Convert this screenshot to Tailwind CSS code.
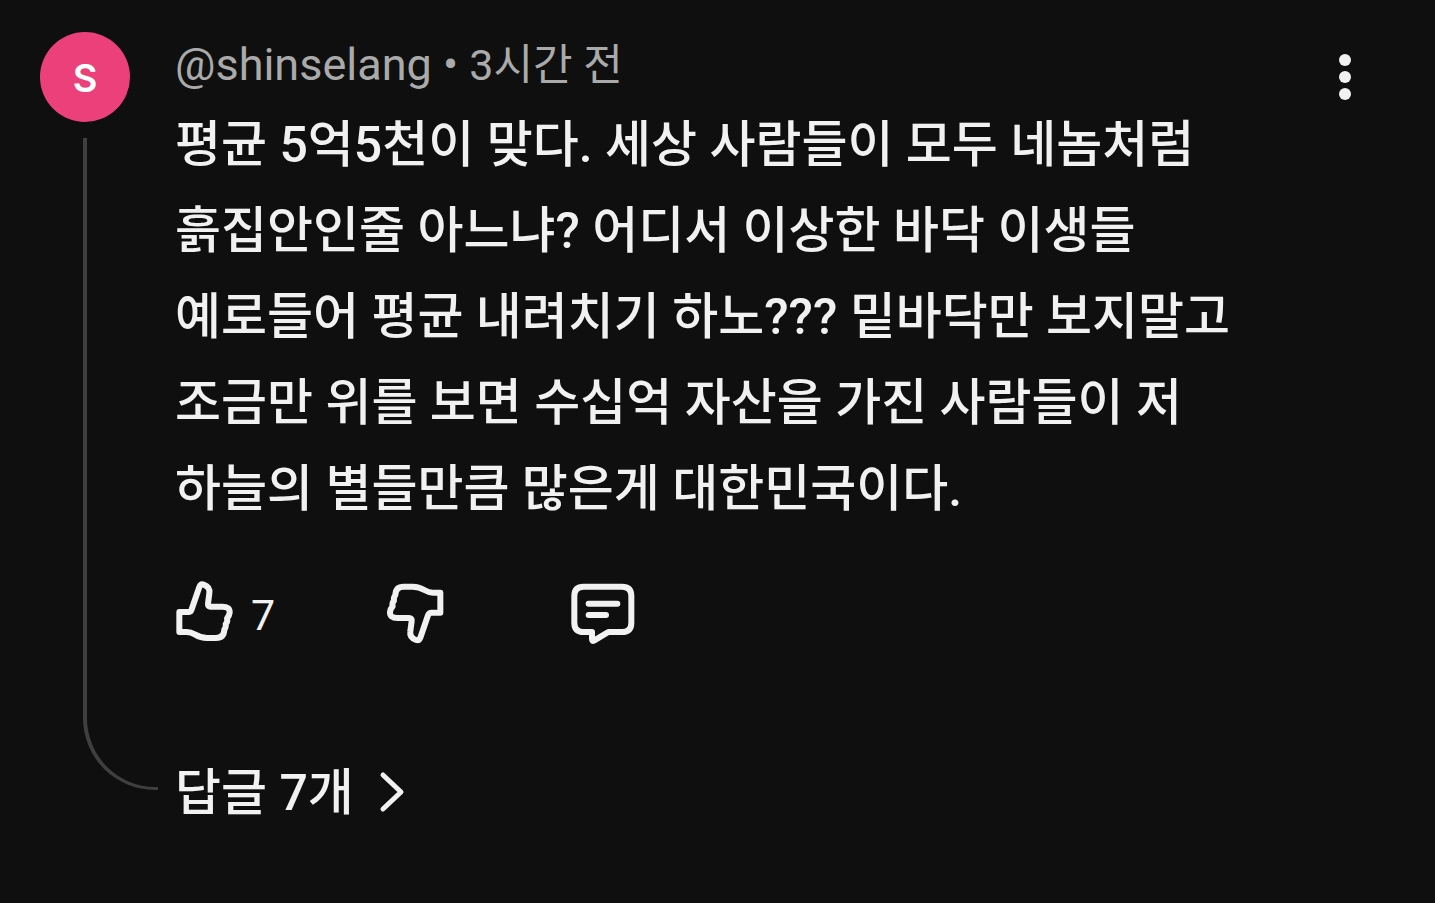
<!DOCTYPE html>
<html lang="ko">
<head>
    <meta charset="UTF-8">
    <meta name="viewport" content="width=device-width, initial-scale=1.0">
    <title>댓글</title>
    <script src="https://cdn.jsdelivr.net/npm/@tailwindcss/browser@4"></script>
</head>
<body class="bg-[#0f0f0f] text-[#f1f1f1] min-h-screen font-[Roboto,'Noto_Sans_CJK_KR',sans-serif]">

    <article class="flex pt-8 pl-10 pr-16">

        <!-- Avatar and thread line -->
        <div class="flex flex-col shrink-0 w-[118px] pb-10">
            <a href="#" class="flex items-center justify-center size-[90px] pt-0.5 rounded-full bg-[#ec407a] text-white text-[38px] font-semibold font-[Inter,sans-serif]">S</a>
            <div class="grow mt-4 ml-[43px] border-l-4 border-b-3 border-[#3f3f3f] rounded-bl-[72px]"></div>
        </div>

        <!-- Comment -->
        <div class="grow min-w-0 pl-[17px]">
            <header class="text-[45px] leading-[66px] text-[#aaaaaa]">
                <a href="#">@shinselang</a> • <time class="text-[43px]">3시간 전</time>
            </header>

            <p class="mt-1 text-[50px] leading-[86px] font-medium">
                평균 5억5천이 맞다. 세상 사람들이 모두 네놈처럼<br>
                흙집안인줄 아느냐? 어디서 이상한 바닥 이생들<br>
                예로들어 평균 내려치기 하노??? 밑바닥만 보지말고<br>
                조금만 위를 보면 수십억 자산을 가진 사람들이 저<br>
                하늘의 별들만큼 많은게 대한민국이다.
            </p>

            <!-- Actions -->
            <div class="flex items-center mt-11 h-[70px]">
                <button type="button" aria-label="좋아요" class="flex items-center gap-4 w-[206px] text-[43px]">
                    <svg class="w-[60px] h-[68px]" viewBox="45 36 180 204" fill="none" stroke="currentColor" stroke-width="18" stroke-linejoin="round">
                        <path d="M58 141H85Q92 141 95 133L118 66Q122 56 131 59Q151 66 148 85L144 116Q143 125 152 125H187Q210 125 209 143Q208 153 201 160Q204 170 197 177Q199 186 193 194Q192 219 168 219H141Q122 219 106 209Q92 201 80 201H58Z"/>
                    </svg>
                    <span class="pt-2">7</span>
                </button>
                <button type="button" aria-label="싫어요" class="w-[186px]">
                    <svg class="w-[68px] h-[68px]" viewBox="33 36 204 204" fill="none" stroke="currentColor" stroke-width="18" stroke-linejoin="round">
                        <path transform="rotate(180 134.5 142)" d="M58 141H85Q92 141 95 133L118 66Q122 56 131 59Q151 66 148 85L144 116Q143 125 152 125H187Q210 125 209 143Q208 153 201 160Q204 170 197 177Q199 186 193 194Q192 219 168 219H141Q122 219 106 209Q92 201 80 201H58Z"/>
                    </svg>
                </button>
                <button type="button" aria-label="답글 달기">
                    <svg class="w-[72px] h-[68px]" viewBox="36 36 216 204" fill="none" stroke="currentColor" stroke-width="18" stroke-linecap="round" stroke-linejoin="round">
                        <path d="M86 65H201Q229 65 229 93V173Q229 201 201 201H160L117 227Q111 230 111 222V201H86Q58 201 58 173V93Q58 65 86 65Z"/>
                        <path d="M101 116H187M101 150H153"/>
                    </svg>
                </button>
            </div>

            <button type="button" class="flex items-center gap-6 mt-[108px] text-[50px] leading-[74px] font-medium">
                <span class="pt-0.5">답글 7개</span>
                <svg class="w-7 h-11" viewBox="0 0 28 44" fill="none" stroke="currentColor" stroke-width="5" stroke-linecap="round" stroke-linejoin="round">
                    <path d="M5 5L23 22L5 39"/>
                </svg>
            </button>
        </div>

        <!-- Menu -->
        <button type="button" aria-label="더보기" class="flex justify-center shrink-0 self-start w-[52px] pt-5">
            <svg class="w-3 h-[50px]" viewBox="0 0 12 50" fill="currentColor">
                <circle cx="6" cy="8" r="6"/>
                <circle cx="6" cy="25" r="6"/>
                <circle cx="6" cy="42" r="6"/>
            </svg>
        </button>
    </article>

</body>
</html>
